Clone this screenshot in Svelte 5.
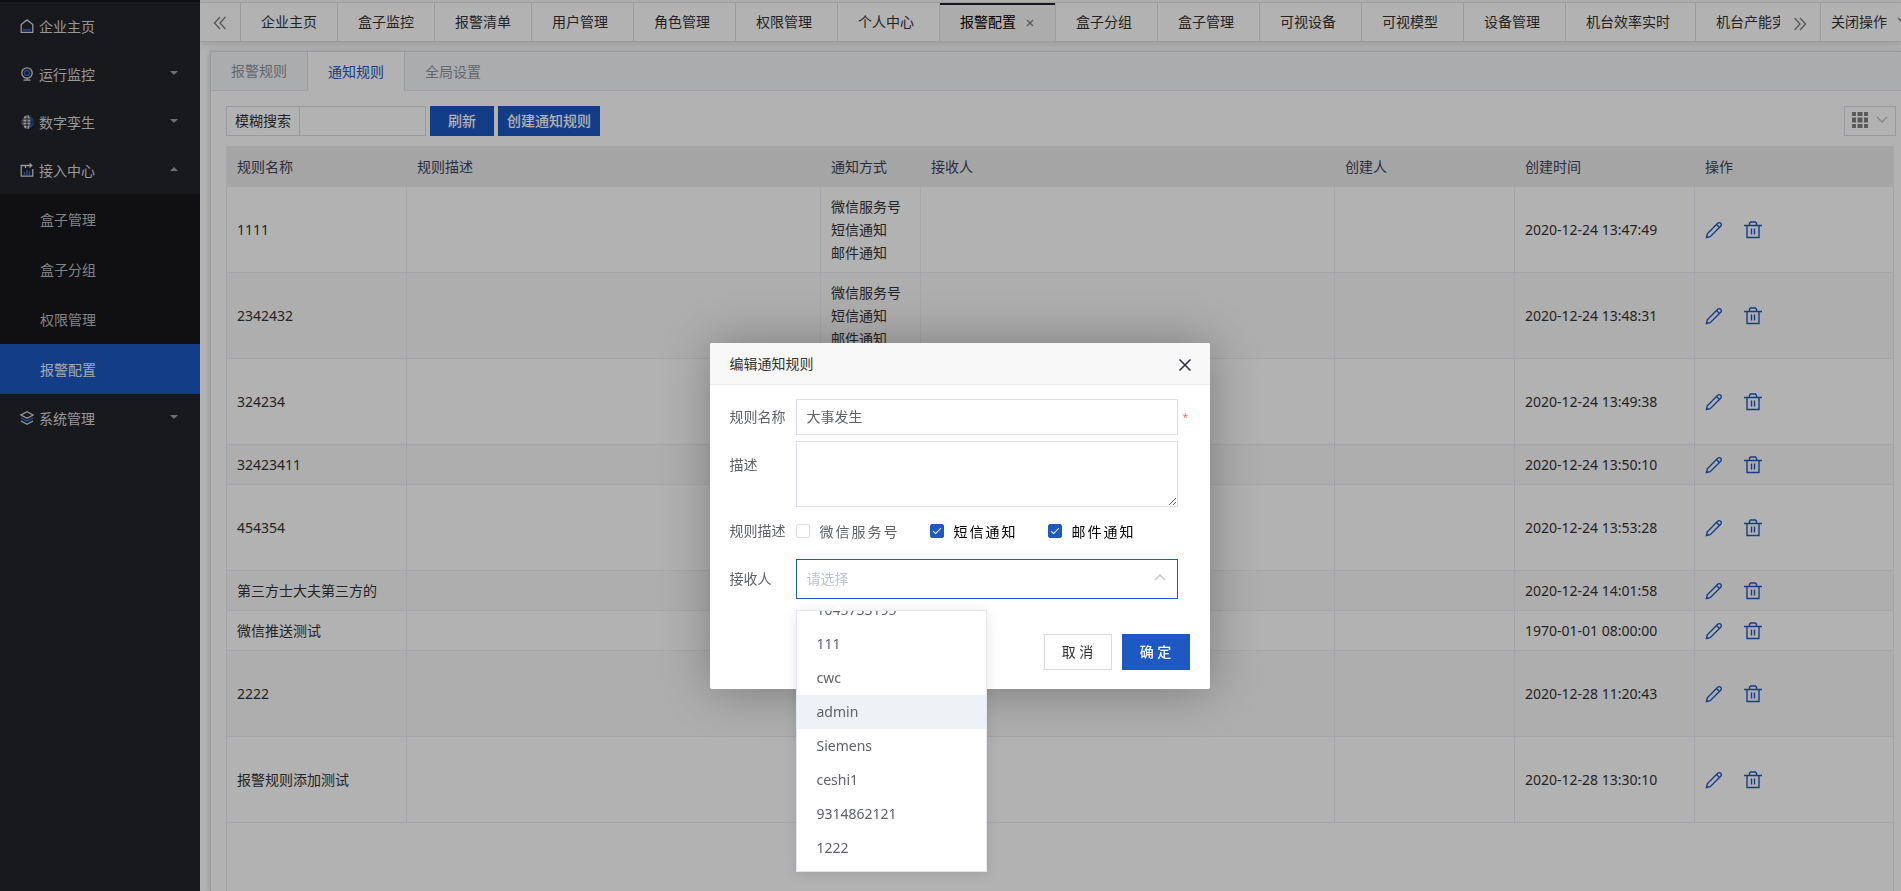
<script lang="ts">
	const tabs = [
		{ name: '企业主页', fixed: true },
		{ name: '盒子监控', fixed: true },
		{ name: '报警清单', fixed: true },
		{ name: '用户管理' },
		{ name: '角色管理' },
		{ name: '权限管理' },
		{ name: '个人中心' },
		{ name: '报警配置', active: true },
		{ name: '盒子分组' },
		{ name: '盒子管理' },
		{ name: '可视设备' },
		{ name: '可视模型' },
		{ name: '设备管理' },
		{ name: '机台效率实时' },
		{ name: '机台产能实时' }
	];

	const menus = [
		{ name: '企业主页', icon: 'home' },
		{ name: '运行监控', icon: 'monitor', arrow: 'down' },
		{ name: '数字孪生', icon: 'globe', arrow: 'down' },
		{ name: '接入中心', icon: 'access', arrow: 'up', children: ['盒子管理', '盒子分组', '权限管理', '报警配置'] },
		{ name: '系统管理', icon: 'layers', arrow: 'down' }
	];

	const all = ['微信服务号', '短信通知', '邮件通知'];

	const rows = [
		{ name: '1111', ways: all, time: '2020-12-24 13:47:49' },
		{ name: '2342432', ways: all, time: '2020-12-24 13:48:31' },
		{ name: '324234', ways: all, time: '2020-12-24 13:49:38' },
		{ name: '32423411', ways: ['短信通知'], time: '2020-12-24 13:50:10' },
		{ name: '454354', ways: all, time: '2020-12-24 13:53:28' },
		{ name: '第三方士大夫第三方的', ways: ['短信通知'], time: '2020-12-24 14:01:58' },
		{ name: '微信推送测试', ways: ['微信服务号'], time: '1970-01-01 08:00:00' },
		{ name: '2222', ways: all, time: '2020-12-28 11:20:43' },
		{ name: '报警规则添加测试', ways: all, time: '2020-12-28 13:30:10' }
	];

	const users = ['1045733195', '111', 'cwc', 'admin', 'Siemens', 'ceshi1', '9314862121', '1222'];

	let ruleName = $state('大事发生');
	let remark = $state('');
	let keyword = $state('');
	let receiver = $state('');
	let wechat = $state(false);
	let sms = $state(true);
	let mail = $state(true);
</script>

<div class="layout">
	<aside class="sidebar">
		<nav>
			{#each menus as menu}
				<a href="#menu" class="menu-item">
					<svg class="menu-icon" viewBox="0 0 14 14" fill="none" stroke="#d8d8d8" stroke-width="1.3">
						{#if menu.icon === 'home'}
							<path d="M1.2 5.500 7 .9l5.800 4.600v7.800H1.200z" />
							<path d="M3 10.800h8" stroke="#2f5fc4" stroke-width="1.800" />
						{:else if menu.icon === 'monitor'}
							<circle cx="7" cy="6" r="5.200" />
							<circle cx="7" cy="6" r="2.500" stroke="#2f5fc4" stroke-width="1.600" />
							<path d="M7 11v2M3.500 13.200h7" />
						{:else if menu.icon === 'globe'}
							<path d="M7 0a7 7 0 0 1 0 14z" fill="#2a4a94" stroke="none" />
							<path d="M8.500 0a7 7 0 1 0 0 14c2.600-4.600 2.600-9.400 0-14z" fill="#d8d8d8" stroke="none" />
							<path d="M7 0v14M3.800 1.500c-1.500 3.700-1.500 7.300 0 11M0 7h14M1 4h9M1 10h9" stroke="#22242a" stroke-width=".9" />
						{:else if menu.icon === 'access'}
							<path d="M5 2.500H1.200v10.700h11.600V6" />
							<path d="M5.500 5V2.500h6M9.500.5l2.300 2-2.300 2" />
							<path d="M4.500 12V9M7 12V7M9.500 12V8" stroke="#2f5fc4" stroke-width="1.600" />
						{:else}
							<path d="M7 .8 13 4 7 7.200 1 4z" />
							<path d="m1 7 6 3.200L13 7" stroke="#2f5fc4" stroke-width="1.800" />
							<path d="m1 10 6 3.200L13 10" />
						{/if}
					</svg>
					<span>{menu.name}</span>
					{#if menu.arrow}
						<i class="caret {menu.arrow}"></i>
					{/if}
				</a>
				{#if menu.children}
					<div class="submenu">
						{#each menu.children as child}
							<a href="#submenu" class:current={child === '报警配置'}>{child}</a>
						{/each}
					</div>
				{/if}
			{/each}
		</nav>
	</aside>

	<div class="content">
		<header class="tabbar">
			<button type="button" class="scroll" aria-label="向左">
				<svg viewBox="0 0 14 14" width="14" height="14"><path d="M7 1 1.500 7 7 13M12.500 1 7 7l5.500 6" /></svg>
			</button>
			<div class="tabs">
				{#each tabs as tab}
					<a href="#tab" class="tab" class:fixed={tab.fixed} class:active={tab.active}>
						{tab.name}
						{#if tab.active}
							<svg class="tab-close" viewBox="0 0 8 8"><path d="m1 1 6 6M7 1 1 7" /></svg>
						{/if}
					</a>
				{/each}
			</div>
			<button type="button" class="scroll right" aria-label="向右">
				<svg viewBox="0 0 14 14" width="14" height="14"><path d="m1.500 1 5.500 6-5.500 6M7 1l5.500 6L7 13" /></svg>
			</button>
			<button type="button" class="close-menu">
				关闭操作
				<svg viewBox="0 0 12 8" width="12" height="8"><path d="m1 1 5 5 5-5" /></svg>
			</button>
		</header>

		<main class="card">
			<div class="card-tabs">
				<a href="#alarm">报警规则</a>
				<a href="#notice" class="active">通知规则</a>
				<a href="#global">全局设置</a>
			</div>

			<div class="card-body">
				<div class="toolbar">
					<div class="search">
						<label for="keyword">模糊搜索</label>
						<input id="keyword" type="text" bind:value={keyword} />
					</div>
					<button type="button" class="primary refresh">刷新</button>
					<button type="button" class="primary">创建通知规则</button>
					<button type="button" class="columns" aria-label="列设置">
						<svg viewBox="0 0 16 16" width="16" height="16" fill="#808080">
							<path d="M0 0h4v4H0zM5.500 0h5v4h-5zM12 0h4v4h-4zM0 5.500h4v5H0zM5.500 5.500h5v5h-5zM12 5.500h4v5h-4zM0 12h4v4H0zM5.500 12h5v4h-5zM12 12h4v4h-4z" />
						</svg>
						<svg viewBox="0 0 12 8" width="12" height="8" fill="none" stroke="#c0c4cc" stroke-width="1.400">
							<path d="m1 1 5 5 5-5" />
						</svg>
					</button>
				</div>

				<div class="table-box">
					<table>
						<colgroup>
							<col class="w180" />
							<col />
							<col class="w100" />
							<col />
							<col class="w180" />
							<col class="w180" />
							<col class="w198" />
						</colgroup>
						<thead>
							<tr>
								<th>规则名称</th>
								<th>规则描述</th>
								<th>通知方式</th>
								<th>接收人</th>
								<th>创建人</th>
								<th>创建时间</th>
								<th>操作</th>
							</tr>
						</thead>
						<tbody>
							{#each rows as row}
								<tr>
									<td>{row.name}</td>
									<td></td>
									<td>
										{#each row.ways as way}
											<div>{way}</div>
										{/each}
									</td>
									<td></td>
									<td></td>
									<td>{row.time}</td>
									<td>
										<div class="ops">
											<button type="button" aria-label="编辑">
												<svg viewBox="0 0 18 18" width="18" height="18">
													<path d="M1.500 16.500 2.300 12.800 12.700 2.300a2.100 2.100 0 0 1 3 3L5.200 15.700zM11.500 3.500l3 3" />
												</svg>
											</button>
											<button type="button" aria-label="删除">
												<svg viewBox="0 0 18 18" width="18" height="18">
													<path d="M0 4.500h18M5.500 4.500V2.200L6.500 1h5l1 1.200v2.300M3 4.500v12h12v-12M7.500 7.500v6M10.500 7.500v6" />
												</svg>
											</button>
										</div>
									</td>
								</tr>
							{/each}
						</tbody>
					</table>
				</div>
			</div>
		</main>
	</div>
</div>

<div class="mask"></div>

<div class="dialog" role="dialog" aria-labelledby="dialog-title">
	<div class="dialog-head">
		<span id="dialog-title">编辑通知规则</span>
		<button type="button" aria-label="关闭">
			<svg viewBox="0 0 12 12" width="12" height="12"><path d="m.5.500 11 11M11.500.500l-11 11" /></svg>
		</button>
	</div>
	<form class="dialog-body">
		<div class="row">
			<label for="rule-name">规则名称</label>
			<input id="rule-name" type="text" bind:value={ruleName} />
			<span class="required">*</span>
		</div>
		<div class="row top">
			<label for="remark">描述</label>
			<textarea id="remark" bind:value={remark}></textarea>
		</div>
		<div class="row checks">
			<span class="label">规则描述</span>
			<label><input type="checkbox" bind:checked={wechat} />微信服务号</label>
			<label class="on"><input type="checkbox" bind:checked={sms} />短信通知</label>
			<label class="on"><input type="checkbox" bind:checked={mail} />邮件通知</label>
		</div>
		<div class="row">
			<label for="receiver">接收人</label>
			<div class="select">
				<select id="receiver" bind:value={receiver}>
					<option value="">请选择</option>
				</select>
				<svg viewBox="0 0 12 8" width="12" height="8"><path d="m1 7 5-5 5 5" /></svg>
				<div class="dropdown">
					<i class="arrow"></i>
					<ul>
						{#each users as user}
							<li class:hover={user === 'admin'}>{user}</li>
						{/each}
					</ul>
				</div>
			</div>
		</div>
		<div class="footer">
			<button type="button" class="cancel">取 消</button>
			<button type="button" class="ok">确 定</button>
		</div>
	</form>
</div>

<style>
	:global(*, *::before, *::after) {
		box-sizing: border-box;
	}

	:global(body) {
		overflow: hidden;
		font-family: 'Noto Sans', 'Noto Sans CJK SC', sans-serif;
		font-size: 14px;
		color: #333;
		background: #fff;
	}

	a {
		color: inherit;
		text-decoration: none;
	}

	button,
	input,
	select,
	textarea {
		font: inherit;
		margin: 0;
		border-radius: 0;
		outline: none;
	}

	button {
		padding: 0;
		border: none;
		background: none;
		color: inherit;
		cursor: pointer;
	}

	.layout {
		display: flex;
		height: 100vh;
	}

	.sidebar {
		flex: 0 0 200px;
		padding-top: 2px;
		background: #22242a;
		box-shadow: inset 0 2px #15161a;
		color: #d8d8d8;
	}

	.menu-item {
		display: flex;
		align-items: center;
		gap: 5px;
		height: 48px;
		padding: 0 22px 0 20px;
	}

	.menu-icon {
		width: 14px;
		height: 14px;
	}

	.caret {
		margin: 0 0 3px auto;
		border: 4px solid transparent;
	}

	.caret.down {
		border-top-color: #a0a0a0;
		border-bottom-width: 0;
	}

	.caret.up {
		border-bottom-color: #a0a0a0;
		border-top-width: 0;
	}

	.submenu {
		background: #17181c;
	}

	.submenu a {
		display: flex;
		align-items: center;
		height: 50px;
		padding-left: 40px;
		color: #bdbdbe;
	}

	.submenu a.current {
		background: #1d58c3;
		color: #eee;
	}

	.content {
		flex: 1;
		min-width: 0;
		display: flex;
		flex-direction: column;
		overflow: hidden;
		padding-top: 2px;
	}

	.tabbar {
		display: flex;
		height: 40px;
		border: 1px solid #e1e1e6;
		border-width: 1px 0;
		box-shadow: 0 2px 8px rgba(0, 0, 0, 0.15);
	}

	.scroll {
		flex: 0 0 40px;
		padding-top: 4px;
	}

	.scroll svg,
	.close-menu svg,
	.tab-close {
		fill: none;
		stroke: #808080;
		stroke-width: 1.400;
	}

	.scroll.right {
		padding-top: 6px;
	}

	.tabs {
		flex: 1;
		min-width: 0;
		display: flex;
		overflow: hidden;
		border-left: 1px solid #e1e1e6;
	}

	.tab {
		flex: none;
		display: flex;
		align-items: center;
		gap: 10px;
		padding: 0 25px 2px 20px;
		border-right: 1px solid #e1e1e6;
	}

	.tab.fixed {
		padding-right: 20px;
	}

	.tab.active {
		padding-right: 21px;
		background: #f7f7f7;
		color: #000;
		box-shadow: inset 0 2px #22242a;
	}

	.tab-close {
		width: 8px;
		height: 8px;
		margin-top: 3px;
	}

	.close-menu {
		flex: 0 0 81px;
		display: flex;
		align-items: center;
		gap: 10px;
		overflow: hidden;
		padding: 0 0 2px 10px;
		border-left: 1px solid #e1e1e6;
		white-space: nowrap;
	}

	.close-menu svg {
		flex: none;
	}

	.card {
		flex: 1;
		margin: 9px 0 0 10px;
		border: 1px solid #dcdfe6;
		border-width: 1px 0 0 1px;
		box-shadow: 0 2px 4px rgba(0, 0, 0, 0.12), 0 0 6px rgba(0, 0, 0, 0.1);
		display: flex;
		flex-direction: column;
		background: #fff;
	}

	.card-tabs {
		display: flex;
		height: 39px;
		border-bottom: 1px solid #e4e7ed;
		background: #f5f7fa;
		color: #909399;
	}

	.card-tabs a {
		display: flex;
		align-items: center;
		height: 39px;
		padding: 0 20px 2px;
		border-right: 1px solid transparent;
	}

	.card-tabs a:first-child {
		height: 38px;
		border-right-color: #dcdfe6;
	}

	.card-tabs a.active {
		border-right-color: #dcdfe6;
		background: #fff;
		color: #1d58c3;
	}

	.card-body {
		flex: 1;
		display: flex;
		flex-direction: column;
		padding: 15px 5px 0 15px;
	}

	.toolbar {
		display: flex;
		gap: 4px;
		height: 30px;
		margin-bottom: 10px;
	}

	.search {
		display: flex;
		width: 200px;
		border: 1px solid #dcdfe6;
	}

	.search label {
		flex: none;
		display: flex;
		align-items: center;
		padding: 0 8px 2px;
		border-right: 1px solid #dcdfe6;
	}

	.search input {
		flex: 1;
		min-width: 0;
		border: none;
	}

	.primary {
		padding: 0 9px 2px;
		background: #1d58c3;
		color: #fff;
		font-weight: 500;
	}

	.refresh {
		padding: 0 18px 2px;
	}

	.columns {
		display: flex;
		align-items: center;
		justify-content: center;
		gap: 8px;
		width: 52px;
		margin-left: auto;
		padding-bottom: 2px;
		border: 1px solid #dcdfe6;
	}

	.table-box {
		flex: 1;
		margin-right: 2px;
		border: 1px solid #ebeef5;
		border-width: 0 1px;
	}

	table {
		width: 100%;
		table-layout: fixed;
		border-collapse: separate;
		border-spacing: 0;
		line-height: 23px;
	}

	.w100 {
		width: 100px;
	}

	.w180 {
		width: 180px;
	}

	.w198 {
		width: 198px;
	}

	th {
		height: 41px;
		padding: 0 10px;
		background: #ededed;
		color: #404258;
		font-weight: 400;
		text-align: left;
	}

	td {
		height: 40px;
		padding: 8px 10px;
		border: 1px solid #ebeef5;
		border-width: 0 1px 1px 0;
	}

	td:last-child {
		border-right: none;
	}

	tbody tr:nth-child(even) {
		background: #fafafa;
	}

	.ops {
		display: flex;
		align-items: center;
		gap: 21px;
	}

	.ops button {
		display: flex;
	}

	.ops svg {
		fill: none;
		stroke: #1d58c3;
		stroke-width: 1.400;
	}

	.mask {
		position: fixed;
		inset: 0;
		background: rgba(0, 0, 0, 0.3);
	}

	.dialog {
		position: absolute;
		top: 343px;
		left: calc(50% - 241px);
		width: 500px;
		border-radius: 2px;
		background: #fff;
		box-shadow: 1px 1px 50px rgba(0, 0, 0, 0.3);
		color: #606266;
	}

	.dialog-head {
		display: flex;
		align-items: center;
		justify-content: space-between;
		height: 42px;
		padding: 0 19px 0 20px;
		border-bottom: 1px solid #eee;
		border-radius: 2px 2px 0 0;
		background: #f8f8f8;
		color: #333;
	}

	.dialog-head span {
		padding-bottom: 2px;
	}

	.dialog-head svg {
		display: block;
		margin-top: 2px;
		fill: none;
		stroke: #2e2d3c;
		stroke-width: 1.500;
	}

	.dialog-body {
		display: flex;
		flex-direction: column;
		padding: 14px 20px 19px;
	}

	.row {
		display: flex;
		align-items: center;
		margin-bottom: 6px;
	}

	.row > label:first-child,
	.label {
		flex: 0 0 66px;
		padding-bottom: 2px;
	}

	.row > input,
	textarea {
		width: 382px;
		height: 36px;
		padding: 0 10px 2px;
		border: 1px solid #dcdfe6;
		color: #606266;
	}

	.row.top {
		align-items: flex-start;
		margin-bottom: 14px;
	}

	.row.top label {
		line-height: 48px;
	}

	textarea {
		display: block;
		height: 66px;
		resize: vertical;
	}

	.required {
		padding-left: 5px;
		color: #f56c6c;
		font-size: 10px;
	}

	.checks {
		height: 20px;
		margin-bottom: 18px;
	}

	.checks label {
		display: flex;
		align-items: center;
		gap: 10px;
		margin-right: 30px;
		letter-spacing: 2px;
	}

	.checks label.on {
		color: #000;
	}

	input[type='checkbox'] {
		appearance: none;
		display: grid;
		place-items: center;
		width: 14px;
		height: 14px;
		border: 1px solid #dcdfe6;
		border-radius: 2px;
		background: #fff;
	}

	input[type='checkbox']:checked {
		border-color: #1d58c3;
		background: #1d58c3;
	}

	input[type='checkbox']:checked::after {
		content: '';
		width: 8px;
		height: 4px;
		margin-bottom: 3px;
		border: 1px solid #fff;
		border-width: 0 0 1px 1px;
		transform: rotate(-45deg);
	}

	.select {
		position: relative;
		width: 382px;
	}

	select {
		display: block;
		width: 100%;
		height: 40px;
		padding: 0 10px 2px;
		appearance: none;
		border: 1px solid #1d58c3;
		background: #fff;
		color: #c0c4cc;
	}

	.select > svg {
		position: absolute;
		top: 14px;
		right: 12px;
		fill: none;
		stroke: #c0c4cc;
		stroke-width: 1.300;
	}

	.dropdown {
		position: absolute;
		top: 51px;
		left: 0;
		width: 191px;
		height: 262px;
		border: 1px solid #e4e7ed;
		background: #fff;
		box-shadow: 0 2px 12px rgba(0, 0, 0, 0.1);
	}

	.dropdown ul {
		display: flex;
		flex-direction: column;
		justify-content: flex-end;
		height: 260px;
		margin: 0;
		padding: 0 0 6px;
		overflow: hidden;
		list-style: none;
	}

	.dropdown li {
		flex: none;
		height: 34px;
		padding: 0 20px;
		line-height: 34px;
	}

	.dropdown li.hover {
		background: #eef2f6;
	}

	.arrow {
		position: absolute;
		top: -6px;
		left: 35px;
		border: 6px solid transparent;
		border-top-width: 0;
		border-bottom-color: #fff;
	}

	.footer {
		display: flex;
		justify-content: flex-end;
		gap: 10px;
		margin-top: 29px;
	}

	.footer button {
		width: 68px;
		height: 36px;
		padding-bottom: 2px;
		border: 1px solid #d9dbe2;
		color: #333;
	}

	.footer .ok {
		border-color: #1d58c3;
		background: #1d58c3;
		color: #fff;
		font-weight: 500;
	}
</style>
